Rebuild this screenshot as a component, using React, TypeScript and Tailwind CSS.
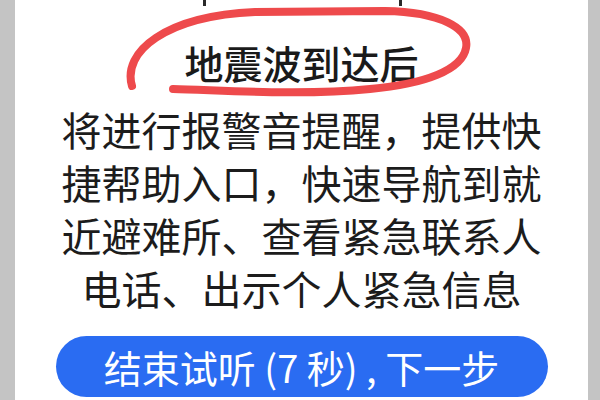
export default function App() {
  const lines = [
    '将进行报警音提醒，提供快',
    '捷帮助入口，快速导航到就',
    '近避难所、查看紧急联系人',
    '电话、出示个人紧急信息',
  ];

  return (
    <div className="flex h-[400px] w-[600px] overflow-hidden bg-[#c4c4c4] font-['Noto_Sans_CJK_SC','Noto_Sans',sans-serif]">
      <div className="relative ml-[15px] flex h-full w-[573px] flex-col items-center bg-white">
        {/* bits of the line above, cut off */}
        <div className="flex h-[6px] w-full">
          <div className="w-[188px]" />
          <div className="h-[6px] w-[3px] bg-[#2a2a2a]" />
          <div className="w-[193px]" />
          <div className="h-[6px] w-[3px] bg-[#2a2a2a]" />
        </div>

        <h1 className="mt-[36px] text-[39px] font-medium leading-[40px] text-[#1a1a1a]">
          地震波到达后
        </h1>

        {/* hand-drawn red circle */}
        <svg
          aria-hidden
          className="pointer-events-none absolute left-0 top-0 h-[110px] w-[573px]"
          viewBox="15 0 573 110"
        >
          <path
            d="M132,86 C122,52 165,16 255,12 L385,11 C440,12 470,28 466,48 C462,70 425,84 370,89 C300,96 220,90 173,89"
            fill="none"
            stroke="#ee4a4c"
            strokeWidth="8"
            strokeLinecap="round"
          />
        </svg>

        <div className="mt-[21px] flex flex-col items-center text-[40px] leading-[53px] text-[#1c1c1c]">
          {lines.map((line) => (
            <p key={line}>{line}</p>
          ))}
        </div>

        <button className="mt-[21px] flex h-[61px] w-[492px] shrink-0 items-center justify-center rounded-full bg-[#2a6cf2] text-[38px] leading-none text-white">
          结束试听 (7 秒) , 下一步
        </button>
      </div>
    </div>
  );
}
